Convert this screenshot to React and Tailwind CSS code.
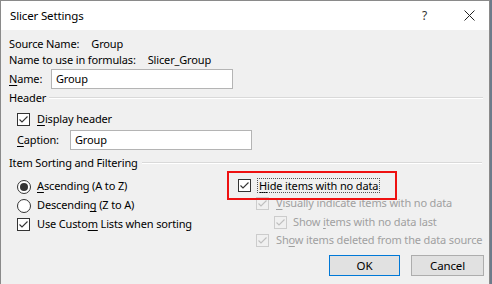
import React from "react";

const F = { fontFamily: '"Noto Sans", "Open Sans", sans-serif' };

function Check({ disabled }) {
  return (
    <span
      className={`inline-flex w-[13px] h-[13px] shrink-0 items-center justify-center border ${
        disabled ? "border-[#cccccc] bg-[#f0f0f0]" : "border-[#333333] bg-white"
      }`}
    >
      <svg width="11" height="11" viewBox="0 0 11 11">
        <polyline
          points="1.5,5.5 4,8 9.5,2.5"
          fill="none"
          stroke={disabled ? "#bfbfbf" : "#333333"}
          strokeWidth="1.1"
        />
      </svg>
    </span>
  );
}

function Radio({ on }) {
  return (
    <span className="inline-flex w-[14px] h-[14px] shrink-0 items-center justify-center rounded-full border border-[#333333] bg-white">
      {on && <span className="w-[8px] h-[8px] rounded-full bg-[#333333]" />}
    </span>
  );
}

function U({ children }) {
  return <span className="underline underline-offset-2">{children}</span>;
}

export default function App() {
  return (
    <div
      className="w-[492px] h-[284px] bg-[#6d7b8b] overflow-hidden relative text-[11px] tracking-[-0.15px] text-black whitespace-nowrap"
      style={F}
    >
      <div className="w-[490px] h-[284px] border-l border-t border-r border-[#8a8a8a] bg-[#f0f0f0] flex flex-col">
        {/* Title bar */}
        <div className="h-[29px] bg-white flex items-center pl-[9px] pr-[14px] shrink-0">
          <span className="text-[11.5px]">Slicer Settings</span>
          <span className="ml-auto mr-[37px] text-[12px] text-[#333]">?</span>
          <svg width="11" height="11" viewBox="0 0 11 11">
            <path d="M0.5 0.5 L10.5 10.5 M10.5 0.5 L0.5 10.5" stroke="#222" strokeWidth="1" />
          </svg>
        </div>

        {/* Body */}
        <div className="pl-[8px] pt-[6px] flex flex-col">
          <div className="h-[16px] leading-[16px] flex gap-[12px]">
            <span>Source Name:</span>
            <span>Group</span>
          </div>
          <div className="h-[16px] leading-[16px] flex gap-[12px]">
            <span>Name to use in formulas:</span>
            <span>Slicer_Group</span>
          </div>
          <div className="mt-[1px] h-[20px] flex items-center">
            <span className="w-[42px]">
              <U>N</U>ame:
            </span>
            <div className="w-[182px] h-[20px] border border-[#b4b4b4] bg-white flex items-center pl-[4px]">
              Group
            </div>
          </div>

          <div className="mt-[1px] h-[16px] leading-[16px] flex items-center pr-[6px]">
            <span>Header</span>
            <div className="flex-1 ml-[3px] border-t border-[#d9d9d9] border-b border-b-white h-0" />
          </div>

          <div className="mt-[5px] h-[16px] flex items-center pl-[8px] gap-[7px]">
            <Check />
            <span>
              <U>D</U>isplay header
            </span>
          </div>

          <div className="mt-[3px] h-[20px] flex items-center pl-[8px]">
            <span className="w-[53px]">
              <U>C</U>aption:
            </span>
            <div className="w-[182px] h-[20px] border border-[#b4b4b4] bg-white flex items-center pl-[4px]">
              Group
            </div>
          </div>

          <div className="mt-[5px] h-[16px] leading-[16px] flex items-center pr-[7px]">
            <span>Item Sorting and Filtering</span>
            <div className="flex-1 ml-[4px] border-t border-[#d9d9d9] border-b border-b-white h-0" />
          </div>

          <div className="flex">
            {/* Left column */}
            <div className="w-[219px] flex flex-col pl-[8px] pt-[6px]">
              <div className="h-[19px] flex items-center gap-[6px]">
                <Radio on />
                <span>
                  <U>A</U>scending (A to Z)
                </span>
              </div>
              <div className="h-[19px] flex items-center gap-[6px]">
                <Radio />
                <span>
                  Descendin<U>g</U> (Z to A)
                </span>
              </div>
              <div className="h-[19px] flex items-center gap-[7px]">
                <Check />
                <span>
                  Use Custo<U>m</U> Lists when sorting
                </span>
              </div>
            </div>

            {/* Right column */}
            <div className="flex-1 flex flex-col pt-[5px]">
              <div className="h-[18px] flex items-center pl-[10px] gap-[7px]">
                <Check />
                <span className="outline-1 outline-dotted outline-[#555] px-[1px] leading-[13px]">
                  <U>H</U>ide items with no data
                </span>
              </div>
              <div className="h-[19px] flex items-center pl-[28px] gap-[7px] text-[#a0a0a0]">
                <Check disabled />
                <span>
                  <U>V</U>isually indicate items with no data
                </span>
              </div>
              <div className="h-[18px] flex items-center pl-[46px] gap-[6px] text-[#a0a0a0]">
                <Check disabled />
                <span>
                  Show <U>i</U>tems with no data last
                </span>
              </div>
              <div className="h-[19px] flex items-center pl-[28px] gap-[7px] text-[#a0a0a0]">
                <Check disabled />
                <span>
                  Sh<U>o</U>w items deleted from the data source
                </span>
              </div>
            </div>
          </div>

          <div className="mt-[5px] flex justify-end pr-[5px] gap-[11px]">
            <button className="w-[71px] h-[21px] bg-[#e1e1e1] border border-[#0078d7] text-[11.5px]" style={F}>
              OK
            </button>
            <button className="w-[73px] h-[21px] bg-[#e1e1e1] border border-[#adadad] text-[11.5px]" style={F}>
              Cancel
            </button>
          </div>
        </div>
      </div>

      {/* Red annotation box */}
      <div className="absolute left-[227px] top-[171px] w-[170px] h-[29px] border-2 border-[#ee1111] pointer-events-none" />
    </div>
  );
}
